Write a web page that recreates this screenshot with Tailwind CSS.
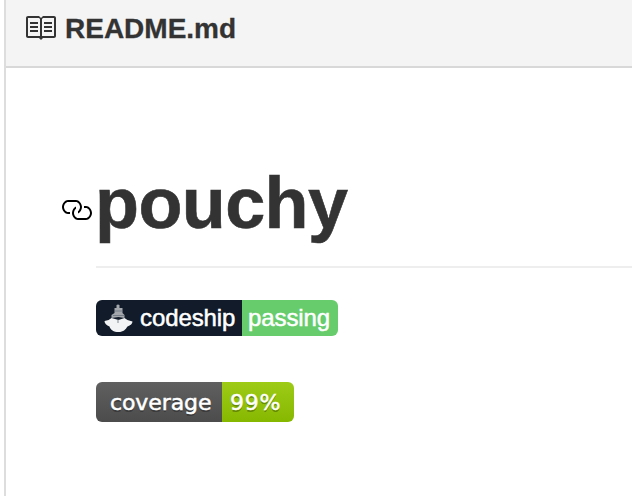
<!DOCTYPE html>
<html lang="en">
<head>
<meta charset="utf-8">
<title>README.md</title>
<script src="https://cdn.jsdelivr.net/npm/@tailwindcss/browser@4"></script>
</head>
<body class="bg-white w-[632px] h-[496px] overflow-hidden font-['Liberation_Sans',Arial,sans-serif] text-[#333]">
<main class="ml-1 h-[496px] border-l-2 border-[#ddd]">
  <header class="flex h-[68px] border-b-2 border-[#d8d8d8] bg-[#f4f4f4] pl-[18px] pt-3">
    <svg class="size-8 shrink-0" viewBox="0 0 16 16" fill="#333"><path d="M3 5h4v1H3V5zm0 3h4V7H3v1zm0 2h4V9H3v1zm11-5h-4v1h4V5zm0 2h-4v1h4V7zm0 2h-4v1h4V9zm2-6v9c0 .55-.45 1-1 1H9.500l-1 1-1-1H2c-.55 0-1-.45-1-1V3c0-.55.45-1 1-1h5.500l1 1 1-1H15c.55 0 1 .45 1 1zm-8 .5L7.500 3H2v9h6V3.500zm7-.5H9.500l-.5.5V12h6V3z"/></svg>
    <span class="ml-[9px] h-8 text-[28px] leading-[33px] font-bold whitespace-nowrap [-webkit-text-stroke:0.3px_#333]">README.md</span>
  </header>
  <article class="pt-[92px] pl-[54px]">
    <div class="flex">
      <a class="mt-[34px] w-9 shrink-0"><svg class="size-8" viewBox="0 0 16 16" fill="#000"><path d="M4 9h1v1H4c-1.500 0-3-1.690-3-3.500S2.550 3 4 3h4c1.450 0 3 1.690 3 3.500 0 1.410-.91 2.720-2 3.250V8.590c.58-.45 1-1.270 1-2.090C10 5.280 8.980 4 8 4H4c-.98 0-2 1.220-2 2.500S3 9 4 9zm9-3h-1v1h1c1 0 2 1.220 2 2.500S13.980 12 13 12H9c-.98 0-2-1.220-2-2.500 0-.83.42-1.640 1-2.090V6.250c-1.090.53-2 1.840-2 3.250C6 11.310 7.550 13 9 13h4c1.450 0 3-1.690 3-3.500S14.500 6 13 6z"/></svg></a>
      <h1 class="h-[108px] flex-1 border-b-2 border-[#eee] text-[72px] leading-[86px] font-bold tracking-[-0.6px] -indent-px [-webkit-text-stroke:0.6px_#333]">pouchy</h1>
    </div>
    <div class="ml-9 mt-8 flex h-9 w-[242px] overflow-hidden rounded-[6px] text-white [-webkit-text-stroke:0.5px_#fff]">
      <div class="flex w-[146px] bg-[#111b29]">
        <svg class="h-9 w-11 shrink-0" viewBox="0 0 44 36"><g fill="#fff" stroke="none"><path d="M20.500 5q1.500-1 3 0v3h3v5l2 2v3l-6-1-7 1v-3l3-2V8h2z" opacity=".62"/><path d="M8.500 21q4 0 7-3l7 2 6-2q3 3 8 3.500c0 2-2 4-5 5-2 3-4 5.500-9 5.500s-8-2-9-5.500c-3-1-5-3-5-5.500z" opacity=".95"/></g><path d="M18 11h9M17 15.500h11M22 19v4" fill="none" stroke="#596371" stroke-width="1.200" opacity=".6"/></svg>
        <span class="text-[24px] leading-9 tracking-[-0.1px] whitespace-nowrap">codeship</span>
      </div>
      <div class="flex-1 bg-[#66cc6c] pl-[6px] text-[24px] leading-9 tracking-[-0.1px] whitespace-nowrap">passing</div>
    </div>
    <div class="ml-9 mt-[46px] flex h-10 w-[198px] overflow-hidden rounded-[6px] font-['DejaVu_Sans',Verdana,sans-serif] text-[22px] leading-[41px] text-white [-webkit-text-stroke:0.5px_#fff] [text-shadow:0_2px_0_rgb(1_1_1/0.3)]">
      <div class="w-[126px] bg-linear-to-b from-[#606060] to-[#4c4c4c] pl-[14px] tracking-[-0.1px] whitespace-nowrap">coverage</div>
      <div class="flex-1 bg-linear-to-b from-[#9dcb16] to-[#87b800] pl-2 tracking-[0.8px] whitespace-nowrap">99%</div>
    </div>
  </article>
</main>
</body>
</html>
